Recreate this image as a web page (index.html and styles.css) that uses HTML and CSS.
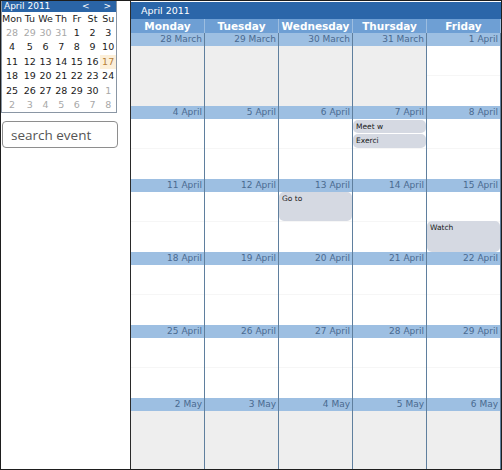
FILE: index.html
```html
<!DOCTYPE html>
<html>
<head>
<meta charset="utf-8">
<link rel="stylesheet" href="styles.css">
</head>
<body>
<div class="page">
  <aside class="sidebar">
    <div class="mini">
      <div class="mini-head"><span class="mini-title">April 2011</span><span class="mini-nav"><span>&lt;</span><span>&gt;</span></span></div>
      <div class="mini-grid">
        <span class="dn">Mon</span><span class="dn">Tu</span><span class="dn">We</span><span class="dn">Th</span><span class="dn">Fr</span><span class="dn">St</span><span class="dn">Su</span>
        <span class="o">28</span><span class="o">29</span><span class="o">30</span><span class="o">31</span><span>1</span><span>2</span><span>3</span>
        <span>4</span><span>5</span><span>6</span><span>7</span><span>8</span><span>9</span><span>10</span>
        <span>11</span><span>12</span><span>13</span><span>14</span><span>15</span><span>16</span><span class="today">17</span>
        <span>18</span><span>19</span><span>20</span><span>21</span><span>22</span><span>23</span><span>24</span>
        <span>25</span><span>26</span><span>27</span><span>28</span><span>29</span><span>30</span><span class="o">1</span>
        <span class="o">2</span><span class="o">3</span><span class="o">4</span><span class="o">5</span><span class="o">6</span><span class="o">7</span><span class="o">8</span>
      </div>
    </div>
    <input class="search" type="text" placeholder="search event">
  </aside>
  <main class="cal">
    <div class="cal-title">April 2011</div>
    <div class="cal-days">
      <span>Monday</span><span>Tuesday</span><span>Wednesday</span><span>Thursday</span><span>Friday</span>
    </div>
    <div class="week">
      <div class="day other"><div class="dh">28 March</div><div class="db"></div></div>
      <div class="day other"><div class="dh">29 March</div><div class="db"></div></div>
      <div class="day other"><div class="dh">30 March</div><div class="db"></div></div>
      <div class="day other"><div class="dh">31 March</div><div class="db"></div></div>
      <div class="day"><div class="dh">1 April</div><div class="db"></div></div>
    </div>
    <div class="week">
      <div class="day"><div class="dh">4 April</div><div class="db"></div></div>
      <div class="day"><div class="dh">5 April</div><div class="db"></div></div>
      <div class="day"><div class="dh">6 April</div><div class="db"></div></div>
      <div class="day"><div class="dh">7 April</div><div class="db">
        <div class="ev" style="top:1px;height:13px">Meet w</div>
        <div class="ev" style="top:15px;height:14px">Exerci</div>
      </div></div>
      <div class="day"><div class="dh">8 April</div><div class="db"></div></div>
    </div>
    <div class="week">
      <div class="day"><div class="dh">11 April</div><div class="db"></div></div>
      <div class="day"><div class="dh">12 April</div><div class="db"></div></div>
      <div class="day"><div class="dh">13 April</div><div class="db">
        <div class="ev" style="top:0px;height:29px">Go to</div>
      </div></div>
      <div class="day"><div class="dh">14 April</div><div class="db"></div></div>
      <div class="day"><div class="dh">15 April</div><div class="db">
        <div class="ev" style="top:29px;height:31px">Watch</div>
      </div></div>
    </div>
    <div class="week">
      <div class="day"><div class="dh">18 April</div><div class="db"></div></div>
      <div class="day"><div class="dh">19 April</div><div class="db"></div></div>
      <div class="day"><div class="dh">20 April</div><div class="db"></div></div>
      <div class="day"><div class="dh">21 April</div><div class="db"></div></div>
      <div class="day"><div class="dh">22 April</div><div class="db"></div></div>
    </div>
    <div class="week">
      <div class="day"><div class="dh">25 April</div><div class="db"></div></div>
      <div class="day"><div class="dh">26 April</div><div class="db"></div></div>
      <div class="day"><div class="dh">27 April</div><div class="db"></div></div>
      <div class="day"><div class="dh">28 April</div><div class="db"></div></div>
      <div class="day"><div class="dh">29 April</div><div class="db"></div></div>
    </div>
    <div class="week">
      <div class="day other"><div class="dh">2 May</div><div class="db"></div></div>
      <div class="day other"><div class="dh">3 May</div><div class="db"></div></div>
      <div class="day other"><div class="dh">4 May</div><div class="db"></div></div>
      <div class="day other"><div class="dh">5 May</div><div class="db"></div></div>
      <div class="day other"><div class="dh">6 May</div><div class="db"></div></div>
    </div>
  </main>
</div>
</body>
</html>
```
FILE: styles.css
```css
html, body {
  margin: 0;
  padding: 0;
  background: #ffffff;
}
.page {
  box-sizing: border-box;
  width: 502px;
  height: 470px;
  border: 1px solid #1e1e1e;
  display: flex;
  overflow: hidden;
  font-family: "DejaVu Sans", Verdana, sans-serif;
}
.sidebar {
  width: 129px;
  flex: none;
  display: flex;
  flex-direction: column;
}
.mini {
  box-sizing: border-box;
  width: 116px;
  border: 1px solid #8a96a4;
  border-top: none;
}
.mini-head {
  height: 11px;
  background: #2a64a6;
  color: #ffffff;
  font-size: 9px;
  line-height: 11px;
  display: flex;
  justify-content: space-between;
  padding: 0 3px 0 2px;
}
.mini-nav {
  display: flex;
  gap: 14px;
  padding-right: 2px;
}
.mini-grid {
  display: grid;
  grid-template-columns: repeat(7, 1fr);
  grid-auto-rows: 14.4px;
  grid-template-rows: 14px;
  font-size: 9.5px;
  color: #1a1a1a;
  text-align: center;
  line-height: 14.4px;
}
.mini-grid .dn {
  line-height: 14px;
  color: #222;
}
.mini-grid .o {
  color: #a8a8a8;
}
.mini-grid .today {
  background: #fcefd9;
  color: #b8803a;
}
.search {
  box-sizing: border-box;
  margin: 8px 0 0 1px;
  width: 116px;
  height: 27px;
  border: 1px solid #8e8e8e;
  border-radius: 4px;
  padding: 0 8px;
  font-family: "Open Sans", "DejaVu Sans", sans-serif;
  font-size: 13.5px;
  color: #555;
  outline: none;
}
.search::placeholder {
  color: #555;
}
.cal {
  flex: 1;
  border-left: 1px solid #2a2a2a;
  padding-top: 1px;
  display: flex;
  flex-direction: column;
  overflow: hidden;
}
.cal-title {
  height: 17px;
  flex: none;
  background: #2b66a9;
  color: #ffffff;
  font-size: 9.5px;
  line-height: 17px;
  padding-left: 10px;
}
.cal-days {
  height: 14px;
  flex: none;
  display: grid;
  grid-template-columns: repeat(5, 74px);
  background: #6e9fd4;
  color: #ffffff;
  font-weight: bold;
  font-size: 10.5px;
  line-height: 14px;
  text-align: center;
}
.cal-days span {
  border-right: 1px solid #9cbde0;
}
.week {
  height: 73px;
  flex: none;
  display: grid;
  grid-template-columns: repeat(5, 74px);
}
.day {
  display: flex;
  flex-direction: column;
  border-right: 1px solid #5f7f9e;
}
.dh {
  height: 13px;
  background: #9dbfe2;
  color: #4a6a90;
  font-size: 9px;
  line-height: 13px;
  text-align: right;
  padding-right: 2px;
}
.db {
  flex: 1;
  position: relative;
  background: #ffffff linear-gradient(to bottom, transparent 29px, #f6f6f6 29px, #f6f6f6 30px, transparent 30px);
}
.other .db {
  background: #eeeeee;
}
.ev {
  position: absolute;
  left: 0;
  right: 0;
  box-sizing: border-box;
  background: #d5d9e2;
  border-radius: 5px;
  color: #1a1a1a;
  font-size: 7.5px;
  line-height: 13px;
  padding: 0 3px;
  overflow: hidden;
  white-space: nowrap;
}
```
